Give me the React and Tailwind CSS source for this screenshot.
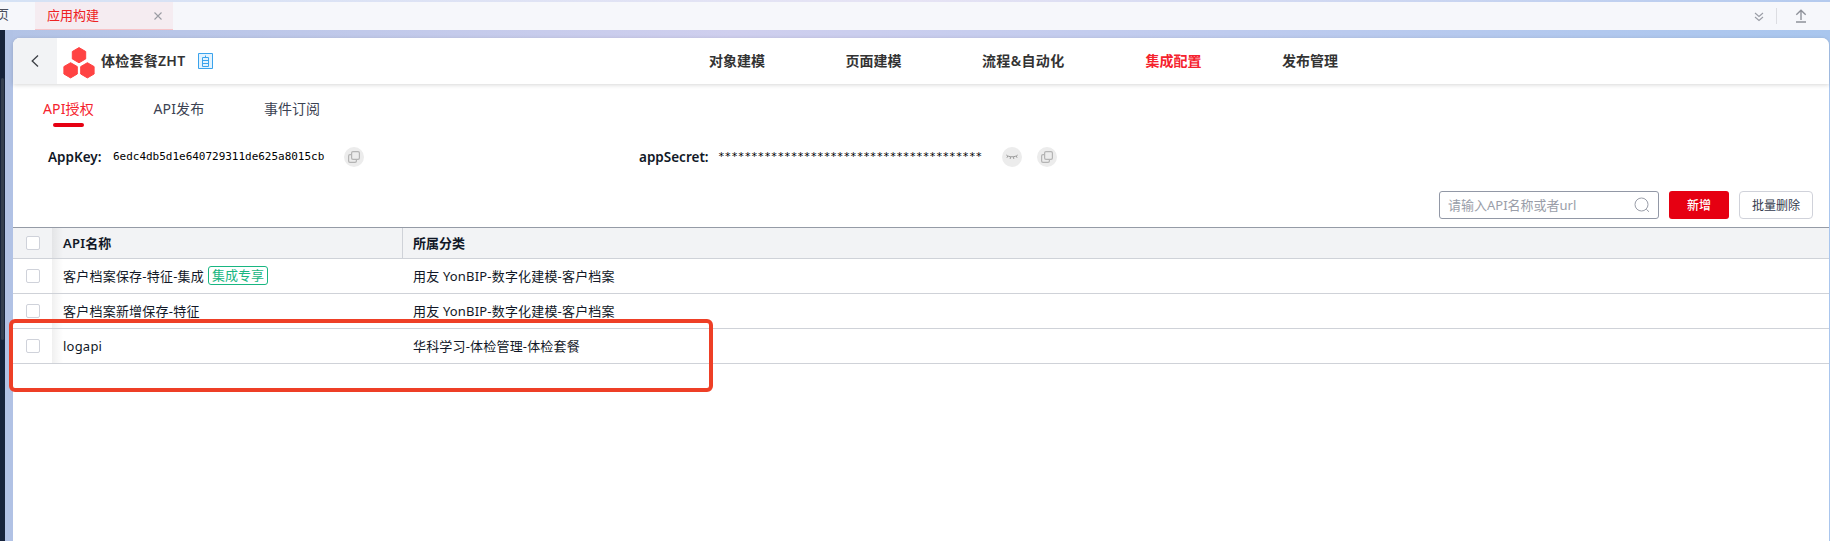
const NAV = [
  { label: '对象建模', w: 'w-[136.5px]' },
  { label: '页面建模', w: 'w-[136.5px]' },
  { label: '流程&自动化', w: 'w-[163.5px] tracking-[0.35px]' },
  { label: '集成配置', w: 'w-[136.5px]', active: true },
  { label: '发布管理', w: 'w-[136.5px]' },
];

const ROWS = [
  { name: '客户档案保存-特征-集成', tag: '集成专享', category: '用友 YonBIP-数字化建模-客户档案' },
  { name: '客户档案新增保存-特征', category: '用友 YonBIP-数字化建模-客户档案' },
  { name: 'logapi', category: '华科学习-体检管理-体检套餐' },
];

function Checkbox() {
  return <span className="block size-[14px] rounded-[2px] border border-[#cfd2da] bg-white" />;
}

function CopyIcon() {
  return (
    <span className="flex size-5 shrink-0 items-center justify-center rounded-full bg-[#ececec]">
      <svg width="12" height="12" viewBox="0 0 12 12" fill="none" stroke="#b4b4b4" strokeWidth="1.2">
        <rect x="3.6" y="0.6" width="7.8" height="7.8" rx="1.4" />
        <path d="M3.6 3.6H2A1.4 1.4 0 0 0 .6 5v5A1.4 1.4 0 0 0 2 11.400h5A1.4 1.4 0 0 0 8.400 10V8.400" />
      </svg>
    </span>
  );
}

function ClosedEyeIcon() {
  return (
    <span className="flex size-5 shrink-0 items-center justify-center rounded-full bg-[#ececec]">
      <svg width="12" height="6" viewBox="0 0 12 6" fill="none" stroke="#9c9c9c" strokeWidth="1">
        <path d="M.3 1C3 3.400 9 3.400 11.700 1M1.800 2 .9 3.800M4.500 2.800 4.200 5M7.500 2.800 7.800 5M10.200 2l.9 1.800" />
      </svg>
    </span>
  );
}

function TopBar() {
  return (
    <div className="flex h-[30px] shrink-0 flex-col">
      <div className="h-[2px] bg-linear-to-r from-[#d5e2f5] via-[#e6e3f4] to-[#b4caee]" />
      <div className="flex h-7 items-stretch bg-[#f6f7fb] text-[13px]">
        <div className="flex w-[35px] items-center overflow-hidden pb-[2px] text-[#4b4f5c]">
          <span className="-ml-[4px]">页</span>
        </div>
        <div className="flex w-[138px] items-center justify-between border-b border-[#f6c3c8] bg-[#f5ecf1] pl-[12px] pr-[11px] text-[#ee2223]">
          <span>应用构建</span>
          <svg width="8" height="8" viewBox="0 0 8 8" stroke="#9a9ca3" strokeWidth="1.1">
            <path d="M.5.5l7 7M7.500.5l-7 7" />
          </svg>
        </div>
        <div className="flex flex-1 items-center justify-end pr-[23px]">
          <svg className="mt-[2px]" width="10" height="10" viewBox="0 0 10 10" fill="none" stroke="#9a9da6" strokeWidth="1.1">
            <path d="M1 1l4 3.500L9 1M1 5l4 3.500L9 5" />
          </svg>
          <span className="ml-[12px] mr-[18px] h-4 w-px bg-[#dcdde2]" />
          <svg className="-mt-px" width="12" height="14" viewBox="0 0 12 14" fill="none" stroke="#8f929b" strokeWidth="1.4">
            <path d="M6 11V1.500M1.300 5.800 6 1.300l4.700 4.500M1 13h10" />
          </svg>
        </div>
      </div>
    </div>
  );
}

function Header() {
  return (
    <header className="relative z-10 flex h-[46px] shrink-0 items-center rounded-t-[7px] bg-white shadow-[0_1px_4px_rgba(0,0,0,0.16)]">
      <div className="flex h-full w-[44px] items-center rounded-tl-[7px] bg-[#f2f3f5] pl-[18px]">
        <svg width="8" height="12" viewBox="0 0 8 12" fill="none" stroke="#3c3f45" strokeWidth="1.300">
          <path d="M7 .5 1.200 6 7 11.500" />
        </svg>
      </div>
      <svg className="ml-[6px] mt-[3px]" width="32" height="32" viewBox="0 0 32 32" fill="#ff4343" stroke="#ff4343" strokeWidth="1" strokeLinejoin="round">
        <path d="M16 .6l6.700 3.900v7.400L16 15.800l-6.700-3.900V4.500zM7.600 15.700l6.700 3.900V27l-6.700 3.900L.9 27v-7.400zM24.400 15.700l6.700 3.900V27l-6.700 3.900-6.700-3.900v-7.400z" />
      </svg>
      <h1 className="ml-[6px] w-[97px] whitespace-nowrap pb-[2px] text-[14px] font-semibold tracking-[0.25px] text-[#333]">体检套餐ZHT</h1>
      <svg width="15" height="16" viewBox="0 0 15 16" fill="none" stroke="#3ba3ec" strokeWidth="1">
        <path fill="#e3f3fe" d="M.5.5h14v15H.5z" />
        <path d="M4.500 4.500h6v9h-6zM4.500 7.500h6M4.500 10.500h6M7.500 2.500v2" />
      </svg>
      <nav className="ml-[496px] flex pb-[2px] text-[14px] font-semibold text-[#333]">
        {NAV.map((n) => (
          <a key={n.label} className={`${n.w} whitespace-nowrap ${n.active ? 'text-[#f5222d]' : ''}`}>{n.label}</a>
        ))}
      </nav>
    </header>
  );
}

function Credentials() {
  return (
    <div className="mt-[20px] flex h-5 items-center pl-[35px] text-[14px] text-[#111827]">
      <span className="w-[65px] pt-px text-[13.5px] font-semibold">AppKey:</span>
      <span className="w-[231px] pt-px font-[DejaVu_Sans_Mono,monospace] text-[11px] tracking-[-0.02px] text-black">6edc4db5d1e640729311de625a8015cb</span>
      <CopyIcon />
      <span className="ml-[275px] w-[79px] pt-px text-[13.5px] font-semibold">appSecret:</span>
      <span className="w-[284px] pt-px font-[DejaVu_Sans_Mono,monospace] text-[11px] tracking-[-0.02px] text-black">{'*'.repeat(40)}</span>
      <ClosedEyeIcon />
      <span className="w-[15px]" />
      <CopyIcon />
    </div>
  );
}

function Toolbar() {
  return (
    <div className="mt-[24px] flex h-7 justify-end gap-[10px] pr-[16px] text-[12px]">
      <div className="flex w-[220px] items-center justify-between rounded-[3px] border border-[#9298a6] pl-[8px] pr-[8px] text-[13px] text-[#9a9ea9]">
        <span className="pt-px">请输入API名称或者url</span>
        <svg width="16" height="16" viewBox="0 0 16 16" fill="none" stroke="#9a9ea9" strokeWidth="1">
          <circle cx="7.500" cy="7.500" r="6.500" />
          <path d="M12.300 12.300l2.700 2.500" />
        </svg>
      </div>
      <button className="w-[60px] rounded-[3px] bg-[#e60012] pt-px font-medium text-white">新增</button>
      <button className="w-[74px] rounded-[4px] border border-[#d0d2da] bg-white pt-px text-[#333a4d]">批量删除</button>
    </div>
  );
}

function StickyCell() {
  return (
    <>
      <span className="flex w-[39px] items-center pl-[13px]"><Checkbox /></span>
      <span className="w-[11px] bg-linear-to-r from-black/6 to-transparent" />
    </>
  );
}

function ApiTable() {
  return (
    <div className="mt-[8px] text-[13px] text-[#111827]">
      <div className="flex h-[32px] border-b border-t border-b-[#cfd2d8] border-t-[#959ba6] bg-[#f2f3f5] font-semibold">
        <StickyCell />
        <span className="flex w-[340px] items-center border-r border-[#cfd2d8] pt-px tracking-[0.2px]">API名称</span>
        <span className="flex items-center pl-[10px] pt-px">所属分类</span>
      </div>
      {ROWS.map((r) => (
        <div key={r.name} className="flex h-[35px] border-b border-[#cfd2d8]">
          <StickyCell />
          <span className="flex w-[350px] items-center pt-px tracking-[0.22px]">
            {r.name}
            {r.tag && (
              <span className="-mt-[2px] ml-[4px] flex h-[19px] w-[60px] items-center justify-center rounded-[3px] border border-[#18b681] pt-px tracking-normal text-[#18b681]">{r.tag}</span>
            )}
          </span>
          <span className="flex items-center pt-px tracking-[0.18px]">{r.category}</span>
        </div>
      ))}
    </div>
  );
}

export default function App() {
  return (
    <div className="relative flex h-[541px] w-[1830px] flex-col overflow-hidden bg-white font-['Noto_Sans','Noto_Sans_CJK_SC',sans-serif]">
      <TopBar />
      <div className="flex min-h-0 flex-1 bg-linear-to-r from-[#b2c3e6] via-[#cfcfee] via-40% to-[#a9c6ee]">
        <div className="w-[5px] bg-[#16233b] pl-px pt-[48px]">
          <div className="h-[262px] w-[3px] rounded-full bg-[#343f50]" />
        </div>
        <div className="w-[8px] bg-[#b1c2e5]" />
        <main className="mt-[8px] flex w-[1816px] flex-col rounded-t-[7px] bg-white">
          <Header />
          <div className="flex h-[43px] pl-[30px] pt-[15px] text-[14px] text-[#3b4252]">
            <div className="flex w-[110.5px] flex-col text-[#f5222d]">
              <span className="leading-[20px] tracking-[0.15px]">API授权</span>
              <span className="ml-[10px] mt-[4px] h-1 w-[31px] shrink-0 rounded-full bg-[#e60012]" />
            </div>
            <span className="w-[110.5px] leading-[20px] tracking-[0.15px]">API发布</span>
            <span className="leading-[20px]">事件订阅</span>
          </div>
          <Credentials />
          <Toolbar />
          <ApiTable />
        </main>
      </div>
      <div className="absolute left-[9px] top-[319px] h-[73px] w-[704px] rounded-[6px] border-4 border-[#ee3f26]" />
    </div>
  );
}
